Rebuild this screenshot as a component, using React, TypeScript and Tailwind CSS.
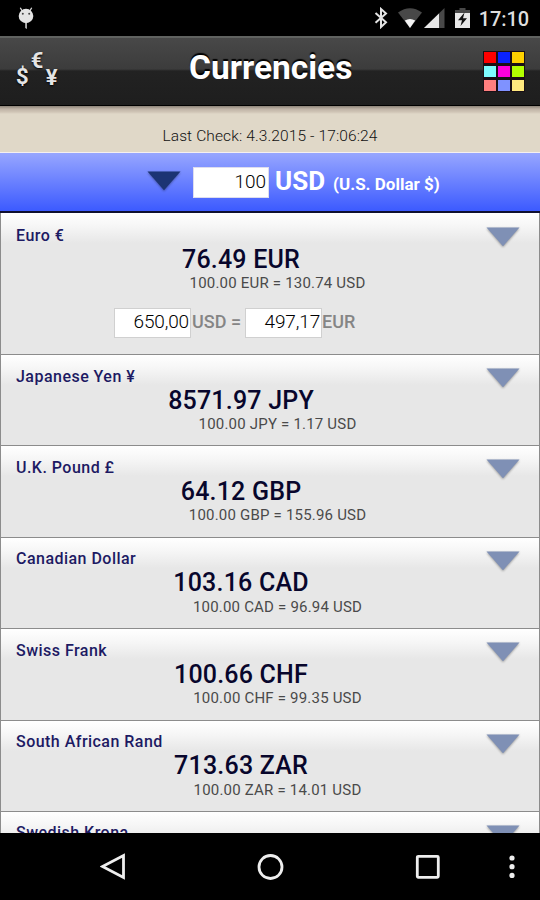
import clsx from 'clsx'

const CURRENCIES = [
  { name: 'Euro €', value: '76.49 EUR', rate: '100.00 EUR = 130.74 USD', open: true },
  { name: 'Japanese Yen ¥', value: '8571.97 JPY', rate: '100.00 JPY = 1.17 USD' },
  { name: 'U.K. Pound £', value: '64.12 GBP', rate: '100.00 GBP = 155.96 USD' },
  { name: 'Canadian Dollar', value: '103.16 CAD', rate: '100.00 CAD = 96.94 USD' },
  { name: 'Swiss Frank', value: '100.66 CHF', rate: '100.00 CHF = 99.35 USD' },
  { name: 'South African Rand', value: '713.63 ZAR', rate: '100.00 ZAR = 14.01 USD' },
  { name: 'Swedish Krona' },
]

const SWATCHES = [
  'bg-[#ff0000]',
  'bg-[#0a22ff]',
  'bg-[#ffd200]',
  'bg-[#7dfcff]',
  'bg-[#ff00dc]',
  'bg-[#b2ff00]',
  'bg-[#ff7f7f]',
  'bg-[#7f92ff]',
  'bg-[#ffe97f]',
]

export default function App() {
  return (
    <div className="flex h-[900px] w-[540px] flex-col overflow-hidden bg-black font-['Roboto',sans-serif]">
      <StatusBar />
      <Header />
      <div className="h-[47px] shrink-0 border-b border-[#f5f0f0] bg-[linear-gradient(#8c8378_0px,#bfb3a6_3px,#d0c5b6_6px,#e0d8c8_8px)] pt-[20px] text-center text-[15.5px] leading-[20px] font-light tracking-[0.12px] text-[#111]">
        Last Check: 4.3.2015 - 17:06:24
      </div>
      <BaseCurrency />
      <div className="min-h-0 flex-1 overflow-hidden">
        {CURRENCIES.map((item) => (
          <CurrencyRow key={item.name} {...item} />
        ))}
      </div>
      <NavBar />
    </div>
  )
}

function StatusBar() {
  return (
    <div className="flex h-[36px] shrink-0 items-center justify-between pr-[11px] pl-[17px]">
      <svg width="18" height="26" viewBox="0 0 18 26" className="mt-[2px]">
        <path d="M3.3 1.8l2 3.5M14.7 1.8l-2 3.5" stroke="#ddd" strokeWidth="1.3" />
        <ellipse cx="9" cy="10" rx="7.3" ry="7.2" fill="#e4e4e4" />
        <path d="M8.3 16h1.5v7l-1.5-1z" fill="#ddd" />
        <circle cx="5.8" cy="7.8" r="1" fill="#444" />
        <circle cx="12.2" cy="7.8" r="1" fill="#444" />
      </svg>
      <div className="flex items-center">
        <svg width="14" height="22" viewBox="0 0 14 22" className="mr-[10px]">
          <path
            d="M1.5 6L12 15.3 7 20V2l5 4.4L1.5 15.7"
            fill="none"
            stroke="#e4e4e4"
            strokeWidth="2"
          />
        </svg>
        <svg width="24" height="20" viewBox="0 0 24 20" className="mr-[2px]">
          <path d="M0 4.5Q12-4 24 4.5L12 20z" fill="#484848" />
          <path d="M6.8 12.6Q12 9.3 17.2 12.6L12 20z" fill="#f4f4f4" />
        </svg>
        <svg width="21" height="20" viewBox="0 0 21 20" className="mr-[10px]">
          <path d="M0 20L20.5 0v20z" fill="#484848" />
          <path d="M0 20L15 5.4V20z" fill="#e8e8e8" />
        </svg>
        <svg width="15" height="20" viewBox="0 0 15 20" className="mr-[9px]">
          <path d="M4.5 0h6v2H15v4H0V2h4.5z" fill="#484848" />
          <path d="M0 5h15v15H0z" fill="#e8e8e8" />
          <path d="M9.5 4.5L3 12.3h4L5.5 18 12 10.3H8z" fill="#111" />
        </svg>
        <span className="mt-px text-[20px] leading-[24px] font-medium tracking-[-0.1px] text-[#dedede]">
          17:10
        </span>
      </div>
    </div>
  )
}

function Header() {
  return (
    <div className="flex h-[70px] shrink-0 items-center justify-between border-t-2 border-b border-t-[#606260] border-b-black bg-[linear-gradient(#484848_0,#3c3c3c_31px,#222_33px,#1e1e1e_100%)] pr-[15px] pl-[16px]">
      <div className="flex h-[42px] w-[44px] text-[22px] leading-[24px] font-bold text-[#e4e4e4] [text-shadow:0_1px_2px_#000]">
        <span className="mt-[14.5px]">$</span>
        <span className="ml-[2px] mt-[-2px]">€</span>
        <span className="ml-[2.5px] mt-[15px]">¥</span>
      </div>
      <h1 className="mt-[-8px] mr-[2px] text-[33.5px] leading-[40px] font-bold text-white [text-shadow:0_-2px_1px_#000]">
        Currencies
      </h1>
      <div className="grid grid-cols-3 gap-[2.4px] bg-[#1a1016] p-px">
        {SWATCHES.map((color) => (
          <div key={color} className={clsx('size-[11.6px]', color)} />
        ))}
      </div>
    </div>
  )
}

function BaseCurrency() {
  return (
    <div className="flex h-[60px] shrink-0 border-b-2 border-[#101030] bg-[linear-gradient(#97a6ff,#3c5aff)] pt-[14px] pl-[147px] text-white">
      <Arrow className="mt-[4px] text-[#1c3474]" />
      <div className="ml-[12px] h-[31px] w-[76px] border border-[#dde] bg-white pr-[2px] text-right text-[19px] leading-[28px] font-light text-black">
        100
      </div>
      <span className="ml-[6px] text-[26px] leading-[28px] font-bold">USD</span>
      <span className="ml-[8px] pt-[3px] text-[17px] leading-[28px] font-bold">(U.S. Dollar $)</span>
    </div>
  )
}

function Arrow({ className }: { className?: string }) {
  return (
    <svg
      width="34"
      height="20"
      viewBox="0 0 34 20"
      className={clsx('shrink-0 drop-shadow-[0_1px_1px_rgba(0,0,0,0.35)]', className)}
    >
      <path d="M0.5 0.5h33L17 19.3z" fill="currentColor" />
    </svg>
  )
}

function CurrencyRow({
  name,
  value,
  rate,
  open,
}: {
  name: string
  value?: string
  rate?: string
  open?: boolean
}) {
  return (
    <div
      className={clsx(
        'border-x border-b border-[#8c8c8c] bg-[linear-gradient(#ffffff_0px,#f6f6f6_13px,#e7e7e7_30px)]',
        open ? 'h-[142px] pt-px' : 'h-[91.4px]',
      )}
    >
      <div className="flex h-[30.5px] justify-between pt-[11.5px] pr-[19px] pl-[15px]">
        <span className="text-[16px] leading-[20px] font-medium tracking-[0.47px] text-[#1d1a63]">
          {name}
        </span>
        <Arrow className="mt-[1.5px] text-[#7f90b5]" />
      </div>
      {value && (
        <div className="pr-[58px] text-center text-[25px] leading-[30px] font-medium tracking-[0.2px] text-[#08062c]">
          {value}
        </div>
      )}
      {rate && (
        <div className="mt-[-0.5px] pl-[15px] text-center text-[15px] leading-[18px] tracking-[0.2px] text-[#4a4a4a]">
          {rate}
        </div>
      )}
      {open && (
        <div className="mt-[16px] flex pl-[113px] text-[18px] leading-[28px] text-[#858585]">
          <Amount value="650,00" />
          <span className="ml-px font-medium">USD =</span>
          <div className="w-[4px]" />
          <Amount value="497,17" />
          <span className="font-medium">EUR</span>
        </div>
      )}
    </div>
  )
}

function Amount({ value }: { value: string }) {
  return (
    <div className="h-[30px] w-[77px] border border-[#d0d0d0] bg-white pr-px text-right text-[19px] leading-[26px] font-light tracking-[-0.15px] text-black">
      {value}
    </div>
  )
}

function NavBar() {
  return (
    <div className="flex h-[67px] shrink-0 items-center bg-black pl-[100px]">
      <svg width="26" height="28" viewBox="0 0 26 28">
        <path d="M23.5 2.5v22L2.5 13.5z" fill="none" stroke="#eee" strokeWidth="2.8" />
      </svg>
      <svg width="28" height="28" viewBox="0 0 28 28" className="ml-[131px]">
        <circle cx="13.5" cy="14" r="11.5" fill="none" stroke="#eee" strokeWidth="2.8" />
      </svg>
      <svg width="26" height="26" viewBox="0 0 26 26" className="ml-[130px]">
        <rect x="2.3" y="2.3" width="21" height="21" rx="1" fill="none" stroke="#eee" strokeWidth="2.8" />
      </svg>
      <svg width="6" height="26" viewBox="0 0 6 26" className="ml-[68px]" fill="#eee">
        <circle cx="3" cy="4" r="2.6" />
        <circle cx="3" cy="12.7" r="2.6" />
        <circle cx="3" cy="21.4" r="2.6" />
      </svg>
    </div>
  )
}
